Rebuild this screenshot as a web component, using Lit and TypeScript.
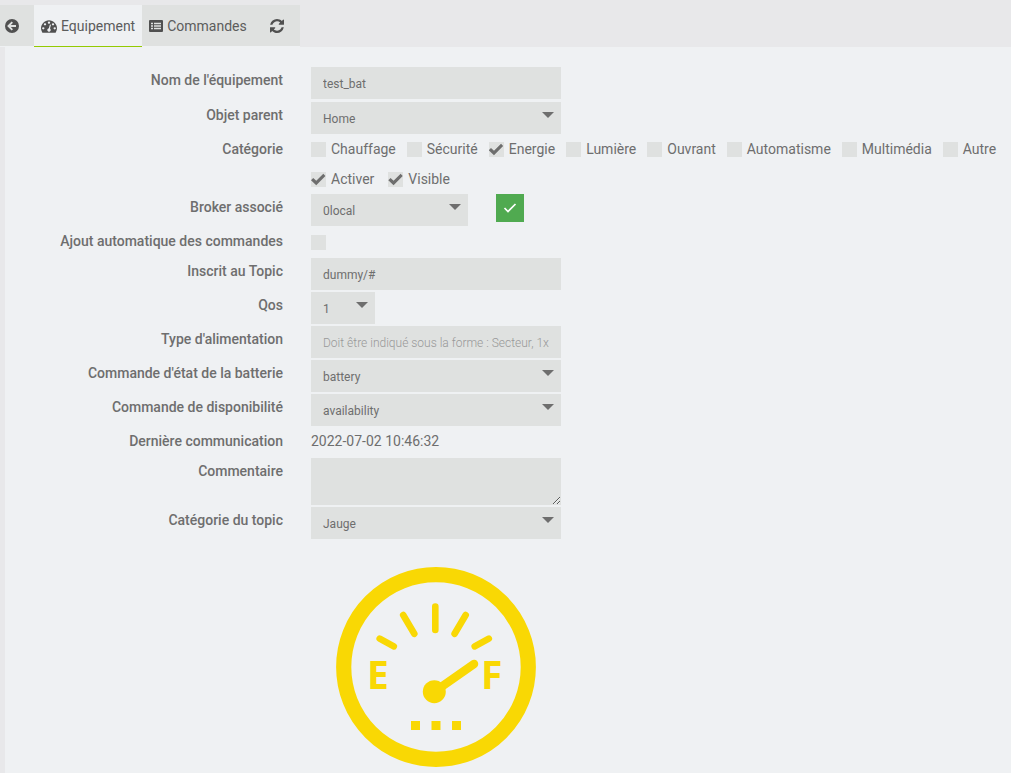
import { LitElement, html, css, svg, nothing } from "lit";
import { customElement, state } from "lit/decorators.js";

interface Check {
  id: string;
  label: string;
  on: boolean;
}

const CATEGORIES: Check[] = [
  { id: "heating", label: "Chauffage", on: false },
  { id: "security", label: "Sécurité", on: false },
  { id: "energy", label: "Energie", on: true },
  { id: "light", label: "Lumière", on: false },
  { id: "opening", label: "Ouvrant", on: false },
  { id: "automatism", label: "Automatisme", on: false },
  { id: "multimedia", label: "Multimédia", on: false },
  { id: "default", label: "Autre", on: false },
];

const OPTIONS: Check[] = [
  { id: "enable", label: "Activer", on: true },
  { id: "visible", label: "Visible", on: true },
];

@customElement("app-root")
export class AppRoot extends LitElement {
  @state() private tab = "equipement";

  static styles = css`
    :host {
      display: block;
      box-sizing: border-box;
      min-height: 100vh;
      padding-top: 5px;
      background: #e8e8ea;
      color: #6e6e6e;
      font: 14px/20px Roboto, sans-serif;
    }
    *,
    *::before {
      box-sizing: border-box;
    }
    .tabs {
      display: flex;
      width: max-content;
      background: #dfe1e0;
    }
    .tab {
      display: flex;
      align-items: center;
      gap: 4px;
      height: 42px;
      padding: 0 7px;
      border: 0;
      border-bottom: 1px solid #eff1f3;
      background: none;
      color: #5c5c5c;
      font: 14px/20px Roboto, sans-serif;
      text-decoration: none;
    }
    .tab.active {
      background: #eff1f3;
      border-bottom-color: #94ca02;
    }
    .tab.back {
      padding: 0 15px 0 5px;
    }
    .tab.refresh {
      padding: 0 16px;
    }
    .tab svg {
      display: block;
      fill: #505050;
    }
    .panel {
      min-height: calc(100vh - 47px);
      margin-left: 5px;
      padding: 20px 0 6px;
      background: #eff1f3;
    }
    .form {
      display: flex;
      flex-direction: column;
      gap: 2px;
      margin: 0;
    }
    .row {
      display: grid;
      grid-template-columns: 278px minmax(0, 1fr);
      column-gap: 28px;
      min-height: 28px;
    }
    .row:first-child {
      min-height: 33px;
    }
    .row.options {
      min-height: 26px;
    }
    .name {
      padding-top: 3px;
      text-align: right;
      font-weight: 500;
    }
    .field {
      display: block;
      width: 250px;
      height: 32px;
      margin: 0;
      padding: 2px 12px 0;
      border: 0;
      border-radius: 0;
      outline: 0;
      background: #dfe1e0;
      color: #6e6e6e;
      font: 12px/20px Roboto, sans-serif;
    }
    .field::placeholder {
      color: #989898;
      font-weight: 300;
      opacity: 1;
    }
    .area {
      height: 47px;
    }
    .pick {
      display: block;
      position: relative;
      width: 250px;
    }
    .pick .field {
      width: 100%;
      appearance: none;
    }
    .pick::after {
      content: "";
      position: absolute;
      top: 10px;
      right: 7px;
      border: 6px solid transparent;
      border-top-color: #6e6e6e;
      border-bottom-width: 0;
      pointer-events: none;
    }
    .broker {
      width: 157px;
    }
    .qos {
      width: 64px;
    }
    .inline {
      display: flex;
      gap: 28px;
    }
    .ok {
      display: grid;
      place-items: center;
      width: 28px;
      height: 28px;
      padding: 0;
      border: 0;
      background: #50aa50;
    }
    .checks {
      display: flex;
      flex-wrap: wrap;
      gap: 0 11px;
      padding-top: 3px;
    }
    .options .checks {
      column-gap: 14px;
    }
    .check {
      display: flex;
      gap: 5px;
      white-space: nowrap;
    }
    .box {
      appearance: none;
      display: grid;
      width: 15px;
      height: 15px;
      margin: 3px 0 0;
      background: #dfe1e0;
    }
    .box:checked::before {
      content: "";
      background: #6e6e6e;
      clip-path: polygon(0 55%, 15% 40%, 35% 58%, 82% 12%, 96% 26%, 35% 88%);
    }
    .box.alone {
      margin-top: 7px;
    }
    .value {
      padding-top: 3px;
    }
    .picture {
      display: block;
      width: 200px;
      height: 200px;
      margin: 28px 0 0 331px;
    }
    .mark {
      font: bold 39px "Open Sans", sans-serif;
    }
  `;

  private check(c: Check) {
    return html`<label class="check"
      ><input class="box" type="checkbox" id=${c.id} .checked=${c.on} />${c.label}</label
    >`;
  }

  private select(id: string, label: string, value: string, size = "") {
    return html`<div class="row">
      <label class="name" for=${id}>${label}</label>
      <span class="pick ${size}"
        ><select class="field" id=${id}>
          <option>${value}</option>
        </select></span
      >
    </div>`;
  }

  private input(id: string, label: string, value: string, hint = "") {
    return html`<div class="row">
      <label class="name" for=${id}>${label}</label>
      <input class="field" id=${id} type="text" .value=${value} placeholder=${hint || nothing} />
    </div>`;
  }

  private gauge() {
    return svg`<svg class="picture" viewBox="0 0 200 200" fill="#f9d804" stroke="#f9d804" stroke-linecap="round" role="img" aria-label="Jauge">
      <circle cx="100" cy="100" r="92.300" fill="none" stroke-width="15.200" />
      <path fill="none" stroke-width="6.600" d="M43.700 71.600 57.800 79.400M67.200 48 78.300 66.800M99.300 39.600V63M129.700 48 118.600 66.800M152.800 71.600 138.700 79.400" />
      <path fill="none" stroke-width="8.500" d="M98 125 138 97" />
      <circle cx="98.300" cy="124.700" r="11.500" stroke="none" />
      <path stroke="none" d="M75 154h9v9h-9zM95.500 154h9v9h-9zM116 154h9v9h-9z" />
      <text class="mark" stroke="none" x="31" y="122">E</text>
      <text class="mark" stroke="none" x="145" y="122">F</text>
    </svg>`;
  }

  render() {
    return html`
      <nav class="tabs">
        <a class="tab back" href="#" aria-label="Retour">
          <svg width="14" height="14" viewBox="0 0 14 14">
            <circle cx="7" cy="7" r="7" />
            <path d="M7.300 3.200 3.500 7l3.800 3.800M3.800 7H11" fill="none" stroke="#dfe1e0" stroke-width="1.900" />
          </svg>
        </a>
        <a class="tab ${this.tab === "equipement" ? "active" : ""}" href="#equipement" @click=${() => (this.tab = "equipement")}>
          <svg width="16" height="14" viewBox="0 0 1792 1536">
            <path
              d="M384 1024q0-53-37.500-90.500T256 896t-90.500 37.500T128 1024t37.500 90.500T256 1152t90.500-37.500T384 1024zM576 576q0-53-37.500-90.500T448 448t-90.500 37.500T320 576t37.500 90.500T448 704t90.500-37.500T576 576zM1004 1057l101-382q6-26-7.500-48.500T1059 597t-48 6.500-30 39.500L880 1025q-60 5-107 43.500t-63 98.500q-20 77 20 146t117 89 146-20 89-117q16-60-6-117t-72-91zM1664 1024q0-53-37.500-90.500T1536 896t-90.500 37.500T1408 1024t37.500 90.500 90.500 37.500 90.500-37.500 37.500-90.500zM1024 384q0-53-37.500-90.500T896 256t-90.500 37.500T768 384t37.500 90.500T896 512t90.500-37.500T1024 384zM1472 576q0-53-37.500-90.500T1344 448t-90.500 37.500T1216 576t37.500 90.500T1344 704t90.500-37.500T1472 576zM1792 1024q0 261-141 483-19 29-54 29H195q-35 0-54-29Q0 1286 0 1024q0-182 71-348t191-286 286-191 348-71 348 71 286 191 191 286 71 348z"
              fill-rule="evenodd"
            />
          </svg>
          Equipement
        </a>
        <a class="tab" href="#commandes" @click=${() => (this.tab = "commandes")}>
          <svg width="14" height="12" viewBox="0 0 14 12">
            <rect width="14" height="12" rx="1" />
            <path d="M2 3.500h2M5 3.500h7M2 6h2M5 6h7M2 8.500h2M5 8.500h7" stroke="#dfe1e0" stroke-width="1.300" />
          </svg>
          Commandes
        </a>
        <button class="tab refresh" type="button" aria-label="Rafraîchir">
          <svg width="14" height="14" viewBox="0 0 1536 1536">
            <path
              d="M1511 928q0 5-1 7-64 268-268 434.500T764 1536q-146 0-282.500-55T238 1324l-129 129q-19 19-45 19t-45-19-19-45V960q0-26 19-45t45-19h448q26 0 45 19t19 45-19 45l-137 137q71 66 161 102t187 36q134 0 250-65t186-179q11-17 53-117 8-23 30-23h192q13 0 22.500 9.500t9.500 22.500zM1536 128v448q0 26-19 45t-45 19h-448q-26 0-45-19t-19-45 19-45l138-138Q969 256 768 256q-134 0-250 65T332 500q-11 17-53 117-8 23-30 23H50q-13 0-22.500-9.500T18 608v-7q65-268 270-434.500T768 0q146 0 284 55.500T1297 212l130-129q19-19 45-19t45 19 19 45z"
            />
          </svg>
        </button>
      </nav>
      <main class="panel">
        <form class="form">
          ${this.input("name", "Nom de l'équipement", "test_bat")}
          ${this.select("parent", "Objet parent", "Home")}
          <div class="row">
            <span class="name" id="categories">Catégorie</span>
            <div class="checks" role="group" aria-labelledby="categories">${CATEGORIES.map((c) => this.check(c))}</div>
          </div>
          <div class="row options">
            <span></span>
            <div class="checks">${OPTIONS.map((c) => this.check(c))}</div>
          </div>
          <div class="row">
            <label class="name" for="broker">Broker associé</label>
            <div class="inline">
              <span class="pick broker"
                ><select class="field" id="broker">
                  <option>0local</option>
                </select></span
              >
              <button class="ok" type="button" aria-label="Valider">
                <svg width="14" height="12" viewBox="0 0 14 12">
                  <path d="M1.500 6 5 9.500 12.500 2" fill="none" stroke="#fff" stroke-width="1.700" />
                </svg>
              </button>
            </div>
          </div>
          <div class="row">
            <label class="name" for="auto">Ajout automatique des commandes</label>
            <input class="box alone" id="auto" type="checkbox" />
          </div>
          ${this.input("topic", "Inscrit au Topic", "dummy/#")}
          ${this.select("qos", "Qos", "1", "qos")}
          ${this.input("battery-type", "Type d'alimentation", "", "Doit être indiqué sous la forme : Secteur, 1x")}
          ${this.select("battery", "Commande d'état de la batterie", "battery")}
          ${this.select("availability", "Commande de disponibilité", "availability")}
          <div class="row">
            <span class="name">Dernière communication</span>
            <span class="value">2022-07-02 10:46:32</span>
          </div>
          <div class="row">
            <label class="name" for="comment">Commentaire</label>
            <textarea class="field area" id="comment"></textarea>
          </div>
          ${this.select("topic-category", "Catégorie du topic", "Jauge")}
        </form>
        ${this.gauge()}
      </main>
    `;
  }
}
